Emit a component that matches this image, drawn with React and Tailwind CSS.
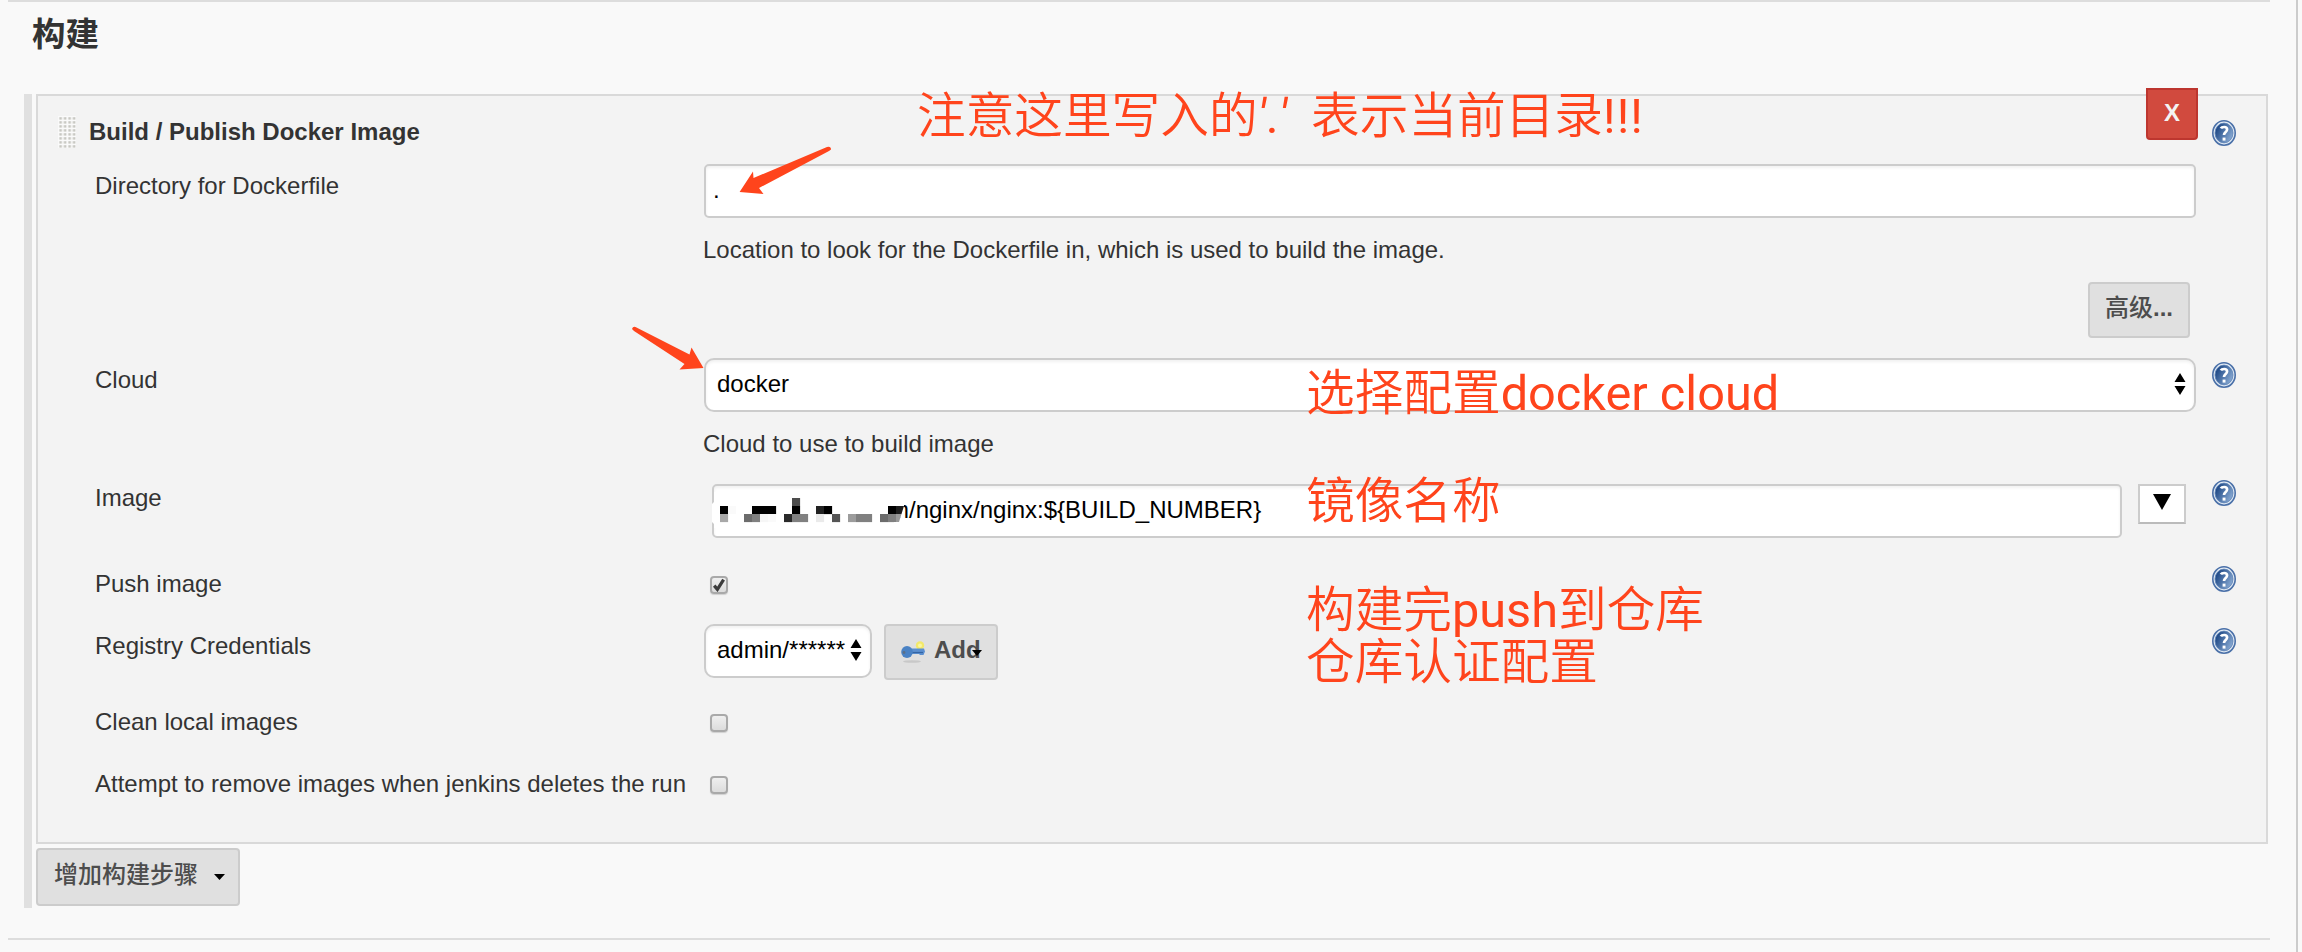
const L = ({ children, className }) => (
  <div className={"w-[609px] shrink-0 whitespace-nowrap text-[#333] " + className}>{children}</div>
);

const Help = ({ className }) => (
  <svg viewBox="0 0 24 26" className={"h-[26px] w-6 shrink-0 " + className}>
    <defs>
      <linearGradient id="hg" x1="0" y1="0.2" x2="1" y2="0.8">
        <stop offset="0.1" stopColor="#204a87" />
        <stop offset="1" stopColor="#8fb0d8" />
      </linearGradient>
    </defs>
    <ellipse cx="12" cy="13" rx="11.2" ry="12.2" fill="#e4ecf5" stroke="#4a70a8" strokeWidth="1.6" />
    <ellipse cx="12" cy="13" rx="9" ry="9.9" fill="url(#hg)" stroke="#5b80b4" strokeWidth="0.8" />
    <path d="M8.9 8.4C9.6 6.9 14.9 5.9 15.1 9.3C15.2 11.9 12 11.9 12 15" fill="none" stroke="#fff" strokeWidth="2.7" />
    <rect x="10.6" y="17.6" width="2.9" height="3" fill="#fff" />
  </svg>
);

const Spinner = () => (
  <svg viewBox="0 0 12 22" className="h-[22px] w-3 shrink-0">
    <path d="M6 0L11.5 9H.5zM6 22L.5 13H11.5z" fill="#000" />
  </svg>
);

const Check = ({ on, className }) => (
  <div className={"ml-1.5 h-[18px] w-[18px] shrink-0 rounded-[4px] border-2 border-[#a9a9a9] bg-linear-to-b from-[#efefef] to-[#dcdcdc] shadow-[0_1px_1px_#d0d0d0] " + className}>
    {on && (
      <svg viewBox="0 0 14 14" className="h-[14px] w-[14px]">
        <path d="M2.2 7.6L5.4 11.4L11.6 1.6" fill="none" stroke="#3c3c3c" strokeWidth="3.2" />
      </svg>
    )}
  </div>
);

const field = "border-2 border-[#ccc] bg-white text-black shadow-[inset_0_2px_3px_rgba(0,0,0,0.06)] ";
const note = "absolute whitespace-pre font-[Roboto,'Noto_Sans_CJK_SC',sans-serif] font-[350] text-[48.67px] leading-[52px] text-[#ff441c] ";

const MOSAIC = [
  [8, 2, "#000"], [8, 3, "#a8a8a8"], [16, 2, "#fafafa"],
  [32, 3, "#6c6c6c"], [40, 2, "#000"], [48, 2, "#000"], [56, 2, "#000"], [40, 3, "#808080"], [48, 3, "#f6f6f6"], [56, 3, "#fafafa"],
  [72, 3, "#2a2a2a"], [80, 1, "#4c4c4c"], [80, 2, "#000"], [80, 3, "#808080"], [88, 3, "#808080"],
  [104, 2, "#222"], [112, 2, "#000"], [104, 3, "#eaeaea"], [120, 3, "#555"],
  [136, 3, "#9c9c9c"], [144, 3, "#808080"], [152, 3, "#808080"],
  [168, 3, "#6c6c6c"], [176, 2, "#000"], [184, 2, "#1c1c1c"], [176, 3, "#808080"], [184, 3, "#999"],
];

export default function App() {
  return (
    <div className="relative flex h-[952px] w-[2302px] overflow-hidden bg-[#f9f9f9] font-['Liberation_Sans','Noto_Sans_CJK_SC',sans-serif] text-[24px] leading-[28px]">
      <div className="flex w-[2270px] flex-col pl-2">
        <div className="h-[2px] bg-[#ddd]" />
        <h1 className="flex h-[92px] pl-6 pt-[13px] text-[33.5px] font-bold leading-[40px] text-[#333]">构建</h1>
        <div className="mr-[2px] ml-4 flex h-[814px] gap-1">
          <div className="w-2 shrink-0 bg-[#e0e0e0]" />
          <div className="flex flex-1 flex-col items-start">
            <div className="flex h-[750px] w-full flex-col border-2 border-[#d9d9d9] bg-[#f3f3f3] pl-5">
              <div className="flex h-[68px] items-start">
                <svg viewBox="0 0 18 32" className="mt-5 h-8 w-[18px]">
                  <defs>
                    <pattern id="grip" width="4.5" height="4" patternUnits="userSpaceOnUse">
                      <rect width="4.5" height="4" fill="#fafafa" />
                      <rect x="1.3" y="1.2" width="2.6" height="2.4" fill="#c8c8c2" />
                    </pattern>
                  </defs>
                  <rect width="18" height="32" fill="url(#grip)" />
                </svg>
                <div className="mt-[22px] ml-[13px] flex-1 font-bold text-[#333]">Build / Publish Docker Image</div>
                <div className="-mt-2 mr-[14px] flex h-[52px] w-[52px] items-center justify-center rounded-b border-2 border-[#bd362f] bg-[#d14a3e] pb-[2px] font-bold text-[#f3f3f3]">X</div>
                <Help className="mt-6 mr-[30px]" />
              </div>

              <div className="flex h-[194px] pl-[37px]">
                <L className="mt-2">Directory for Dockerfile</L>
                <div className="flex w-[1492px] flex-col">
                  <div className={field + "flex h-[54px] items-center rounded-[5px] pb-[2px] pl-[7px]"}>.</div>
                  <div className="mt-[18px] -ml-px text-[#333]">Location to look for the Dockerfile in, which is used to build the image.</div>
                  <div className="mt-[18px] mr-[6px] flex h-14 w-[102px] justify-center self-end rounded-[4px] border-2 border-[#ccc] bg-[#e0e0e0] pt-[10px] font-bold text-[#4d4d4d]">
                    <span className="font-medium">高级</span>...
                  </div>
                </div>
              </div>

              <div className="flex h-[126px] pl-[37px]">
                <L className="mt-2">Cloud</L>
                <div className="flex w-[1492px] flex-col">
                  <div className={field + "flex h-[54px] items-center rounded-[10px] pr-2 pb-[2px] pl-[11px]"}>
                    <span className="flex-1">docker</span>
                    <Spinner />
                  </div>
                  <div className="mt-[18px] -ml-px text-[#333]">Cloud to use to build image</div>
                </div>
                <Help className="mt-1 ml-4" />
              </div>

              <div className="flex h-[84px] pl-[37px]">
                <L className="">Image</L>
                <div className="relative ml-2">
                  <div className={field + "flex h-[54px] w-[1410px] items-center rounded-[5px] pb-[2px] pl-[175px]"}>m/nginx/nginx:${"{"}BUILD_NUMBER{"}"}</div>
                  <svg viewBox="0 0 196 40" className="absolute top-[6px] left-0 h-10 w-[196px]">
                    <defs>
                      <clipPath id="mask"><path d="M2 2H192V16L187 32H182V38H2V34L0 32V14L2 12z" /></clipPath>
                    </defs>
                    <g clipPath="url(#mask)">
                      <rect width="196" height="40" fill="#fff" />
                      {MOSAIC.map(([x, y, c]) => (
                        <rect key={x + "-" + y} x={x} y={y * 8} width="8.1" height="8.1" fill={c} />
                      ))}
                    </g>
                  </svg>
                </div>
                <div className="ml-4 flex h-10 w-12 justify-center border-2 border-[#ccc] border-b-[#bbb] bg-white pt-2">
                  <svg viewBox="0 0 18 16" className="h-4 w-[18px]"><path d="M0 0H18L9 16z" /></svg>
                </div>
                <Help className="-mt-1 ml-[26px]" />
              </div>

              <div className="flex h-[56px] pl-[37px]">
                <L className="mt-[2px]">Push image</L>
                <Check on className="mt-2" />
                <Help className="-mt-[2px] ml-[1484px]" />
              </div>

              <div className="flex h-[84px] pl-[37px]">
                <L className="mt-2">Registry Credentials</L>
                <div className={field + "flex h-[54px] w-[168px] shrink-0 items-center rounded-[10px] pr-2 pb-[2px] pl-[11px]"}>
                  <span className="flex-1">admin/******</span>
                  <Spinner />
                </div>
                <div className="relative ml-3 flex h-14 w-[114px] shrink-0 rounded-[4px] border-2 border-[#ccc] bg-[#e0e0e0] pt-[10px] pl-[14px] font-bold text-[#4d4d4d]">
                  <svg viewBox="0 0 26 26" className="mt-1 mr-2 h-[26px] w-[26px]">
                    <ellipse cx="12" cy="21.500" rx="9" ry="1.300" fill="#c8c8c8" />
                    <circle cx="20" cy="5.500" r="4.200" fill="#f3e96a" />
                    <circle cx="20" cy="5.500" r="2" fill="#fbf6a0" />
                    <path d="M11 8.500H24L25 11.500L23.500 15H20L19 14H11z" fill="#5b8fd0" />
                    <path d="M12 12.500H23" stroke="#3465a4" strokeWidth="1.200" />
                    <ellipse cx="7" cy="12" rx="5.800" ry="6" fill="#4a82c4" />
                    <circle cx="4" cy="12.500" r="1.400" fill="#5c6f86" />
                  </svg>
                  Add
                  <svg viewBox="0 0 10 6" className="absolute top-6 left-[86px] h-[6px] w-[10px]"><path d="M0 0H10L5 6z" /></svg>
                </div>
                <Help className="mt-1 ml-[1214px]" />
              </div>

              <div className="flex h-[62px] pl-[37px]">
                <L className="">Clean local images</L>
                <Check className="mt-[6px]" />
              </div>
              <div className="flex pl-[37px]">
                <L className="">Attempt to remove images when jenkins deletes the run</L>
                <Check className="mt-[6px]" />
              </div>
            </div>

            <div className="mt-1 flex h-[58px] w-[204px] rounded-[4px] border-2 border-[#ccc] bg-[#e0e0e0] pt-[11px] pl-4 font-medium text-[#4d4d4d]">
              增加构建步骤
              <svg viewBox="0 0 11 6" className="mt-[13px] ml-4 h-[6px] w-[11px]"><path d="M0 0H11L5.500 6z" fill="#000" /></svg>
            </div>
          </div>
        </div>
        <div className="mt-[30px] h-[2px] shrink-0 bg-[#ddd]" />
      </div>
      <div className="ml-[26px] w-[2px] bg-[#ccc]" />

      <div className={note + "top-[91px] left-[917px]"}>
        注意这里写入的<span className="font-normal"><i>'</i>.<i>'</i>{"  "}</span>表示当前目录<span className="font-normal tracking-[1.1px]">!!!</span>
      </div>
      <div className={note + "top-[368px] left-[1306px]"}>选择配置<span className="font-normal">docker cloud</span></div>
      <div className={note + "top-[476px] left-[1306px]"}>镜像名称</div>
      <div className={note + "top-[585px] left-[1306px]"}>
        构建完<span className="font-normal">push</span>到仓库<br />仓库认证配置
      </div>

      <svg viewBox="0 0 240 250" className="absolute top-[130px] left-[620px] h-[250px] w-[240px]" fill="#ff441c">
        <path d="M119.600 62L133 41.500L133.500 48L207 17Q211 16 211 19.500L209 21L139 58L143.500 64z" />
        <path d="M12 199Q13 196 15.500 197L69.500 224.500L71.500 217.500L83.500 238L59.500 239.500L64.500 234L14 201z" />
      </svg>
    </div>
  );
}
